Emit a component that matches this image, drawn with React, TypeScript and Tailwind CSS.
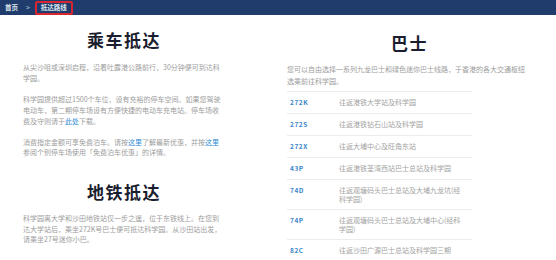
const font = { fontFamily: '"Noto Sans CJK SC", "Noto Sans", sans-serif' };

const routes: { code: string; lines: string[] }[] = [
  { code: "272K", lines: ["往返港铁大学站及科学园"] },
  { code: "272S", lines: ["往返港铁钻石山站及科学园"] },
  { code: "272X", lines: ["往返大埔中心及旺角东站"] },
  { code: "43P", lines: ["往返港铁荃湾西站巴士总站及科学园"] },
  { code: "74D", lines: ["往返观塘码头巴士总站及大埔九龙坑(经", "科学园)"] },
  { code: "74P", lines: ["往返观塘码头巴士总站及大埔中心(经科", "学园)"] },
  { code: "82C", lines: ["往返沙田广源巴士总站及科学园三期"] },
];

function Heading({ children }: { children: React.ReactNode }) {
  return (
    <h2 className="text-center text-[17px] font-bold leading-[20px] tracking-[1.5px] text-[#1b1e2f]">
      {children}
    </h2>
  );
}

function Link({ children }: { children: React.ReactNode }) {
  return <span className="text-[#2d8bd5]">{children}</span>;
}

export default function App() {
  return (
    <div className="h-[260px] w-[556px] overflow-hidden bg-white" style={font}>
      {/* breadcrumb bar */}
      <div className="flex h-[15px] items-center bg-[#1f3c6c] pl-[5px] text-[6.5px] font-bold text-[#dfe5ee]">
        <span>首页</span>
        <span className="ml-[8px] text-[#9fb0c8]">&gt;</span>
        <span className="ml-[5px] flex h-[14px] items-center rounded-[2px] border-2 border-[#d8252f] px-[4px]">
          抵达路线
        </span>
      </div>

      <div className="flex pl-[23px]">
        {/* left column */}
        <div className="w-[202px] whitespace-nowrap pt-[15px] text-[7px] leading-[10.7px] text-[#9d9d9d]">
          <Heading>乘车抵达</Heading>
          <p className="mt-[12px]">
            从尖沙咀或深圳启程，沿着吐露港公路前行，30分钟便可到达科
            <br />
            学园。
          </p>
          <p className="mt-[11px]">
            科学园提供超过1500个车位，设有充裕的停车空间。如果您驾驶
            <br />
            电动车，第二期停车场设有方便快捷的电动车充电站。停车场收
            <br />
            费及守则请于<Link>此处</Link>下载。
          </p>
          <p className="mt-[10px]">
            消费指定金额可享免费泊车。请按<Link>这里</Link>了解最新优惠，并按<Link>这里</Link>
            <br />
            参阅个别停车场使用「免费泊车优惠」的详情。
          </p>
          <div className="mt-[24px]">
            <Heading>地铁抵达</Heading>
          </div>
          <p className="mt-[11px]">
            科学园离大学和沙田地铁站仅一步之遥，位于东铁线上。在您到
            <br />
            达大学站后，乘坐272K号巴士便可抵达科学园。从沙田站出发，
            <br />
            请乘坐27号迷你小巴。
          </p>
        </div>

        {/* right column */}
        <div className="ml-[62px] w-[245px] pt-[18px]">
          <Heading>巴士</Heading>
          <p className="mt-[10px] whitespace-nowrap text-[7px] leading-[12px] text-[#9d9d9d]">
            您可以自由选择一系列九龙巴士和绿色迷你巴士线路，于香港的各大交通枢纽
            <br />
            选乘前往科学园。
          </p>
          <div className="mt-[4px] w-[185px] border-t border-[#ececec]">
            {routes.map((r) => (
              <div
                key={r.code}
                className="flex min-h-[22px] items-center border-b border-[#ececec] py-[5.5px]"
              >
                <div className="w-[52px] self-start pl-[3px] text-[6.5px] font-bold leading-[9px] tracking-[0.6px] text-[#3a87c9]">
                  {r.code}
                </div>
                <div className="flex-1 whitespace-nowrap text-[7px] leading-[9px] text-[#a3a3a3]">
                  {r.lines.map((l, i) => (
                    <div key={i}>{l}</div>
                  ))}
                </div>
              </div>
            ))}
          </div>
        </div>
      </div>
    </div>
  );
}
